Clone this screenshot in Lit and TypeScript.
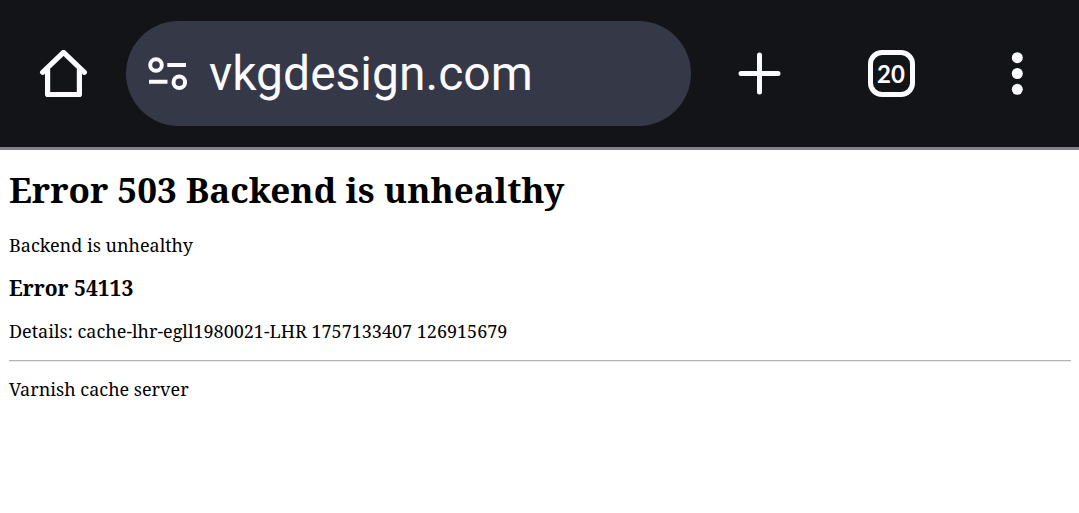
import { LitElement, html, css } from "lit";
import { customElement, property } from "lit/decorators.js";

@customElement("browser-bar")
class BrowserBar extends LitElement {
  @property() url = "";
  @property({ type: Number }) tabs = 0;

  static styles = css`
    :host {
      display: flex;
      align-items: center;
      height: 147px;
      background: #131418;
      border-bottom: 3px solid #83818b;
      color: #fbfaff;
      font-family: Roboto, sans-serif;
    }
    button {
      display: flex;
      align-items: center;
      justify-content: center;
      flex: none;
      width: 126px;
      height: 105px;
      padding: 0;
      border: 0;
      background: none;
      color: inherit;
    }
    button.new-tab {
      width: 137px;
    }
    button.menu {
      width: 125px;
    }
    svg {
      display: block;
      fill: none;
      stroke: currentColor;
    }
    .address {
      display: flex;
      align-items: center;
      flex: 1;
      min-width: 0;
      height: 105px;
      padding: 0 24px 0 19px;
      box-sizing: border-box;
      border-radius: 53px;
      background: #353847;
    }
    .address button {
      width: 44px;
      height: 49px;
    }
    input {
      flex: 1;
      min-width: 0;
      height: 65px;
      margin-left: 20px;
      padding: 0;
      border: 0;
      outline: 0;
      background: none;
      color: inherit;
      font: 400 48px "Roboto", sans-serif;
    }
    .count {
      display: flex;
      align-items: center;
      justify-content: center;
      width: 47px;
      height: 47px;
      box-sizing: border-box;
      border: 5px solid currentColor;
      border-radius: 14px;
      font: 700 24px/36px "Lato", sans-serif;
    }
  `;

  render() {
    return html`
      <button aria-label="Home">
        <svg width="48" height="47" viewBox="0 0 48 47" stroke-width="5.2" stroke-linejoin="round" stroke-linecap="round">
          <path d="M3.6 22.3 24.5 2.4 45.4 22.3" />
          <path d="M8.6 20V44.6H40.4V20" />
        </svg>
      </button>
      <div class="address">
        <button aria-label="Site settings">
          <svg width="40" height="35" viewBox="0 0 40 35" stroke-width="4">
            <circle cx="9" cy="9" r="5.8" />
            <path d="M20.3 9H39M2 25.8H20.5" />
            <circle cx="32.3" cy="26.2" r="5.8" />
          </svg>
        </button>
        <input aria-label="Address" type="text" spellcheck="false" .value=${this.url} />
      </div>
      <button class="new-tab" aria-label="New tab">
        <svg width="43" height="43" viewBox="0 0 43 43" stroke-width="5" stroke-linecap="round">
          <path d="M21.5 3V40M3 21.5H40" />
        </svg>
      </button>
      <button aria-label="Switch tabs"><span class="count">${this.tabs}</span></button>
      <button class="menu" aria-label="Menu">
        <svg width="13" height="43" viewBox="0 0 13 43">
          <g fill="currentColor" stroke="none">
            <circle cx="7.3" cy="5.7" r="5.5" />
            <circle cx="7.3" cy="21.5" r="5.5" />
            <circle cx="7.3" cy="37.3" r="5.5" />
          </g>
        </svg>
      </button>
    `;
  }
}

@customElement("app-root")
class AppRoot extends LitElement {
  static styles = css`
    :host {
      display: block;
      min-height: 100vh;
      background: #fff;
      color: #000;
      font: 18px/24px "Noto Serif", "Droid Serif", "Liberation Serif", serif;
    }
    main {
      padding: 16px 8px 16px 9px;
    }
    h1 {
      margin: 0 0 19px;
      font-size: 35px;
      line-height: 48px;
    }
    h3 {
      margin: 0 0 17px;
      font-size: 21px;
      line-height: 28px;
    }
    p {
      margin: 0 0 17px;
    }
    hr {
      margin: 0 0 15px;
      border: 0;
      border-top: 1px solid #b4b4b4;
      border-bottom: 1px solid #ebebeb;
    }
  `;

  render() {
    return html`
      <browser-bar url="vkgdesign.com" .tabs=${20}></browser-bar>
      <main>
        <h1>Error 503 Backend is unhealthy</h1>
        <p>Backend is unhealthy</p>
        <h3>Error 54113</h3>
        <p>Details: cache-lhr-egll1980021-LHR 1757133407 126915679</p>
        <hr />
        <p>Varnish cache server</p>
      </main>
    `;
  }
}
